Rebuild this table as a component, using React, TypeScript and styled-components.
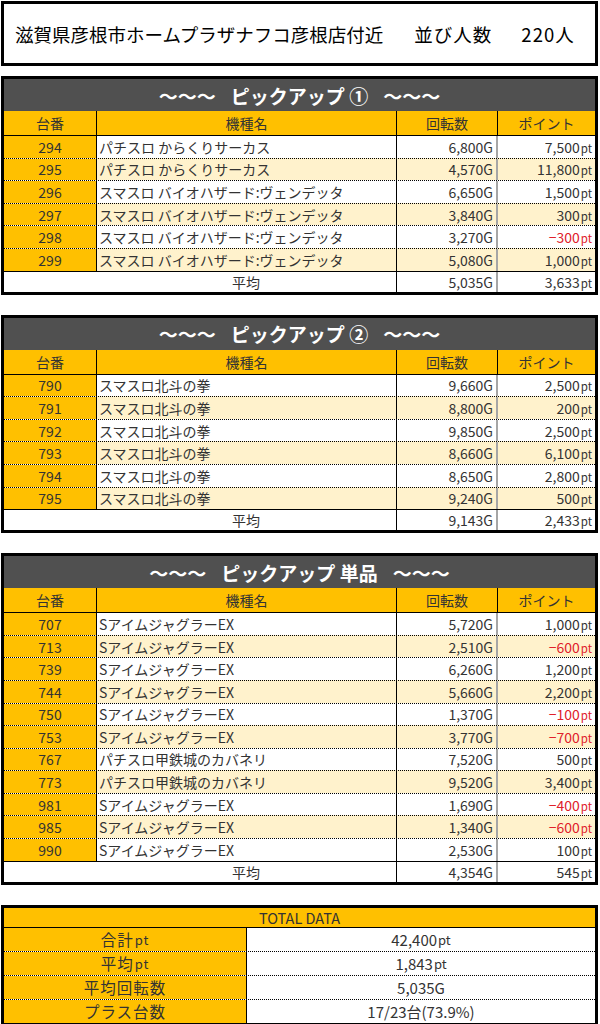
import React from "react";
import styled, { createGlobalStyle } from "styled-components";

const Global = createGlobalStyle`
  html, body { margin: 0; padding: 0; background: #fff; }
  body {
    font-family: "Noto Sans CJK JP", "Noto Sans", sans-serif;
    color: #333;
  }
`;

const YELLOW = "#FFC000";
const CREAM = "#FFF2CC";

const Page = styled.div`
  width: 597px;
  margin-left: 1px;
  padding-top: 1px;
  display: flex;
  flex-direction: column;
`;

const TitleBox = styled.div`
  height: 65px;
  box-sizing: border-box;
  border: 3px solid #000;
  display: flex;
  align-items: center;
  padding-left: 11px;
  font-size: 18.5px;
  color: #000;
  white-space: pre;
`;

const TitlePart = styled.span<{ $ml?: number; $ls?: number }>`
  margin-left: ${(p) => p.$ml ?? 0}px;
  letter-spacing: ${(p) => p.$ls ?? 0}px;
`;

const Table = styled.section<{ $gap: number }>`
  margin-top: ${(p) => p.$gap}px;
  border: 3px solid #000;
  display: flex;
  flex-direction: column;
`;

const Caption = styled.div`
  height: 32px;
  background: #505050;
  color: #fff;
  font-weight: 700;
  font-size: 19px;
  display: flex;
  align-items: center;
  justify-content: center;
  gap: 15px;
  white-space: pre;
`;

const Row = styled.div<{ $h: number; $line: "solid" | "dotted" | "none"; $bg?: string }>`
  display: grid;
  grid-template-columns: 93px 300px 101px 1fr;
  height: ${(p) => p.$h}px;
  box-sizing: border-box;
  background: ${(p) => p.$bg ?? "#fff"};
  border-top: ${(p) =>
    p.$line === "none" ? "none" : `1px ${p.$line} #000`};
  font-size: 14px;
`;

const Cell = styled.div<{ $align?: "left" | "center" | "right"; $right?: string; $bg?: string; $pl?: number }>`
  display: flex;
  align-items: center;
  justify-content: ${(p) =>
    p.$align === "left" ? "flex-start" : p.$align === "right" ? "flex-end" : "center"};
  padding: 0 3px 0 ${(p) => p.$pl ?? 3}px;
  box-sizing: border-box;
  border-right: ${(p) => p.$right ?? "none"};
  background: ${(p) => p.$bg ?? "transparent"};
  white-space: pre;
  overflow: hidden;
  color: #333;
`;

const HeadCell = styled(Cell)`
  background: ${YELLOW};
  font-size: 14px;
`;

const AvgLabel = styled.div`
  grid-column: 1 / span 2;
  border-right: 1px solid #000;
  display: flex;
  align-items: center;
  justify-content: center;
  padding-left: 92px;
`;

const Unit = styled.span<{ $size?: number }>`
  font-size: ${(p) => p.$size ?? 11.5}px;
  margin-left: 1px;
`;

const Val = styled.span<{ $neg?: boolean }>`
  color: ${(p) => (p.$neg ? "#e0212b" : "#333")};
`;

const TotalHead = styled.div`
  height: 19px;
  background: ${YELLOW};
  display: flex;
  align-items: center;
  justify-content: center;
  font-size: 14.5px;
  color: #333;
`;

const TotalRow = styled.div<{ $solid?: boolean }>`
  display: grid;
  grid-template-columns: 243px 1fr;
  height: 24px;
  box-sizing: border-box;
  border-top: 1px ${(p) => (p.$solid ? "solid" : "dotted")} #000;
`;

const TotalLabel = styled.div`
  background: ${YELLOW};
  border-right: 1px solid #000;
  display: flex;
  align-items: center;
  justify-content: center;
  font-size: 15.5px;
  letter-spacing: 1px;
  color: #333;
`;

const TotalValue = styled.div`
  display: flex;
  align-items: center;
  justify-content: center;
  font-size: 15px;
  color: #333;
`;

type Item = [string, string, string, string];

const t1: Item[] = [
  ["294", "パチスロ からくりサーカス", "6,800G", "7,500"],
  ["295", "パチスロ からくりサーカス", "4,570G", "11,800"],
  ["296", "スマスロ バイオハザード:ヴェンデッタ", "6,650G", "1,500"],
  ["297", "スマスロ バイオハザード:ヴェンデッタ", "3,840G", "300"],
  ["298", "スマスロ バイオハザード:ヴェンデッタ", "3,270G", "−300"],
  ["299", "スマスロ バイオハザード:ヴェンデッタ", "5,080G", "1,000"],
];

const t2: Item[] = [
  ["790", "スマスロ北斗の拳", "9,660G", "2,500"],
  ["791", "スマスロ北斗の拳", "8,800G", "200"],
  ["792", "スマスロ北斗の拳", "9,850G", "2,500"],
  ["793", "スマスロ北斗の拳", "8,660G", "6,100"],
  ["794", "スマスロ北斗の拳", "8,650G", "2,800"],
  ["795", "スマスロ北斗の拳", "9,240G", "500"],
];

const J = "SアイムジャグラーEX";
const K = "パチスロ甲鉄城のカバネリ";
const t3: Item[] = [
  ["707", J, "5,720G", "1,000"],
  ["713", J, "2,510G", "−600"],
  ["739", J, "6,260G", "1,200"],
  ["744", J, "5,660G", "2,200"],
  ["750", J, "1,370G", "−100"],
  ["753", J, "3,770G", "−700"],
  ["767", K, "7,520G", "500"],
  ["773", K, "9,520G", "3,400"],
  ["981", J, "1,690G", "−400"],
  ["985", J, "1,340G", "−600"],
  ["990", J, "2,530G", "100"],
];

const Pt: React.FC<{ v: string }> = ({ v }) => {
  const neg = v.startsWith("−");
  return (
    <Val $neg={neg}>
      {v}
      <Unit>pt</Unit>
    </Val>
  );
};

const PickupTable: React.FC<{
  title: string;
  items: Item[];
  avgG: string;
  avgPt: string;
  gap: number;
}> = ({ title, items, avgG, avgPt, gap }) => (
  <Table $gap={gap}>
    <Caption>
      <span>～～～</span>
      <span>{`ピックアップ ${title}`}</span>
      <span>～～～</span>
    </Caption>
    <Row $h={24} $line="none">
      <HeadCell $right="1px solid #000">台番</HeadCell>
      <HeadCell $right="1px solid #000">機種名</HeadCell>
      <HeadCell $right="1px solid #000">回転数</HeadCell>
      <HeadCell>ポイント</HeadCell>
    </Row>
    {items.map((it, i) => (
      <Row key={it[0]} $h={22.6} $line={i === 0 ? "solid" : "dotted"} $bg={i % 2 === 1 ? CREAM : "#fff"}>
        <Cell $bg={YELLOW} $right="1px solid #000">{it[0]}</Cell>
        <Cell $align="left" $right="1px solid #000" $pl={2}>{it[1]}</Cell>
        <Cell $align="right" $right="2px solid #a6a6a6">{it[2]}</Cell>
        <Cell $align="right"><Pt v={it[3]} /></Cell>
      </Row>
    ))}
    <Row $h={21} $line="solid">
      <AvgLabel>平均</AvgLabel>
      <Cell $align="right" $right="2px solid #a6a6a6">{avgG}</Cell>
      <Cell $align="right"><Pt v={avgPt} /></Cell>
    </Row>
  </Table>
);

export default function App() {
  return (
    <>
      <Global />
      <Page>
        <TitleBox>
          <TitlePart>滋賀県彦根市ホームプラザナフコ彦根店付近</TitlePart>
          <TitlePart $ml={31} $ls={1}>並び人数</TitlePart>
          <TitlePart $ml={29} $ls={1}>220人</TitlePart>
        </TitleBox>
        <PickupTable gap={10} title="①" items={t1} avgG="5,035G" avgPt="3,633" />
        <PickupTable gap={20} title="②" items={t2} avgG="9,143G" avgPt="2,433" />
        <PickupTable gap={20} title="単品" items={t3} avgG="4,354G" avgPt="545" />
        <Table $gap={20}>
          <TotalHead>TOTAL DATA</TotalHead>
          <TotalRow $solid>
            <TotalLabel>合計<Unit $size={13}>pt</Unit></TotalLabel>
            <TotalValue>42,400<Unit $size={13}>pt</Unit></TotalValue>
          </TotalRow>
          <TotalRow>
            <TotalLabel>平均<Unit $size={13}>pt</Unit></TotalLabel>
            <TotalValue>1,843<Unit $size={13}>pt</Unit></TotalValue>
          </TotalRow>
          <TotalRow>
            <TotalLabel>平均回転数</TotalLabel>
            <TotalValue>5,035G</TotalValue>
          </TotalRow>
          <TotalRow>
            <TotalLabel>プラス台数</TotalLabel>
            <TotalValue>17/23台(73.9%)</TotalValue>
          </TotalRow>
        </Table>
      </Page>
    </>
  );
}
